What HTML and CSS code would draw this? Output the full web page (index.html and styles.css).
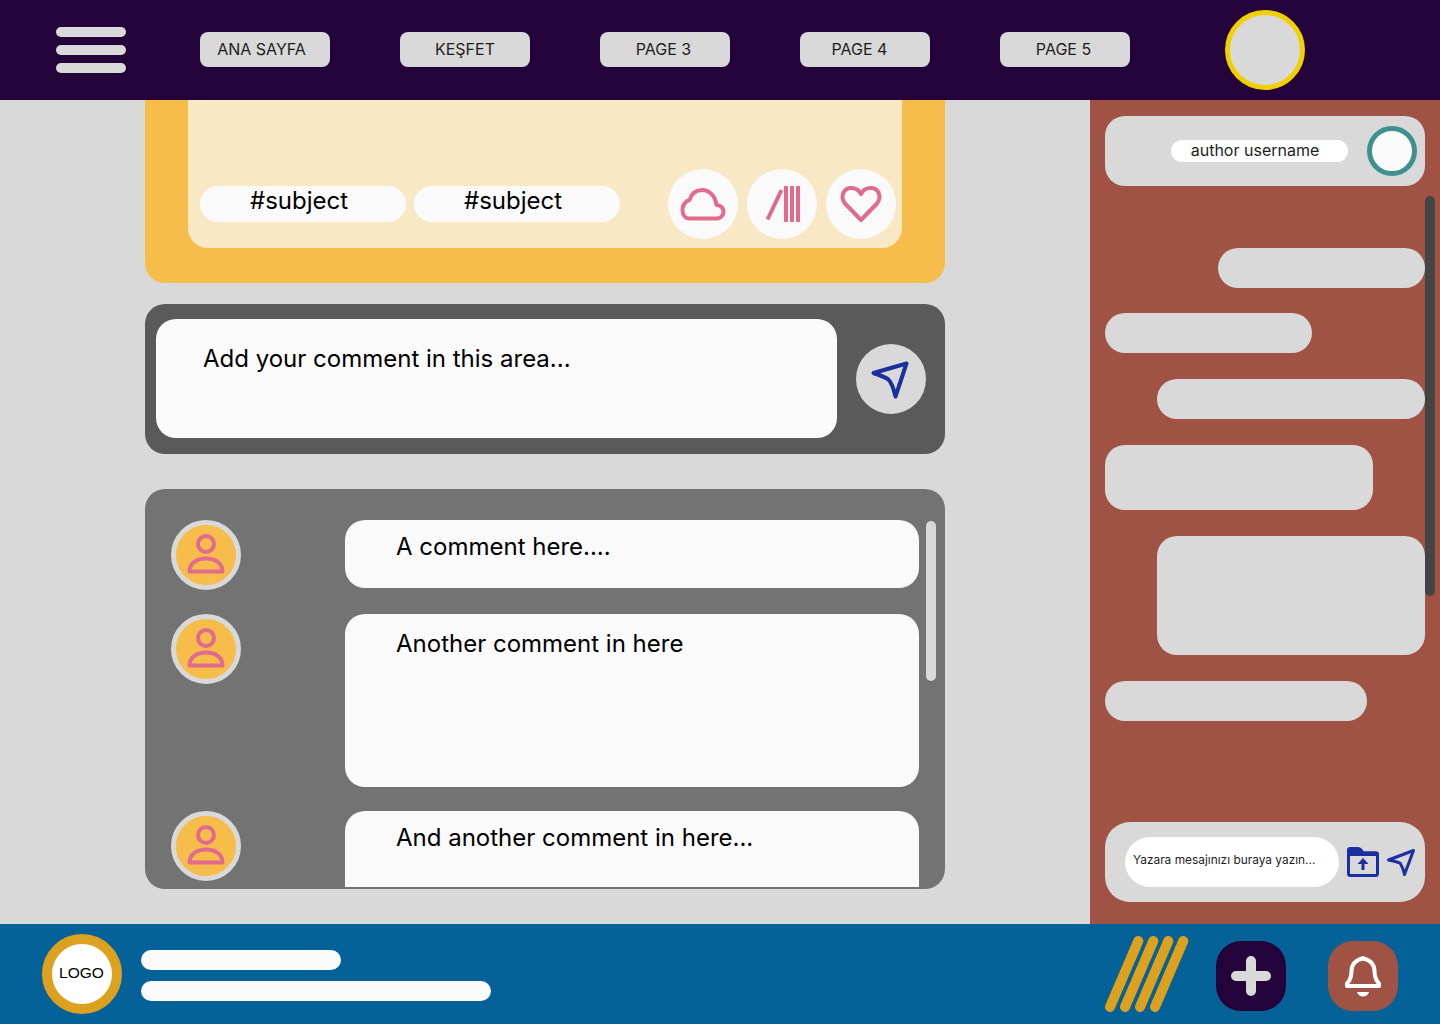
FILE: index.html
```html
<!DOCTYPE html>
<html lang="en">
<head>
    <meta charset="UTF-8">
    <meta name="viewport" content="width=device-width, initial-scale=1.0">
    <title>Blog</title>
    <link rel="stylesheet" href="styles.css">
</head>
<body>
    <header class="topbar">
        <div class="menu-icon"><span></span><span></span><span></span></div>
        <nav class="nav">
            <a class="nav-btn nav-btn-first">ANA SAYFA</a>
            <a class="nav-btn nav-btn-second">KEŞFET</a>
            <a class="nav-btn">PAGE 3</a>
            <a class="nav-btn nav-btn-fourth">PAGE 4</a>
            <a class="nav-btn">PAGE 5</a>
        </nav>
        <div class="profile"></div>
    </header>

    <div class="middle">
        <main class="content">
            <section class="post">
                <div class="post-inner">
                    <span class="tag">#subject</span>
                    <span class="tag">#subject</span>
                    <div class="actions">
                        <button class="action">
                            <svg viewBox="0 0 70 70"><path class="pink-line" d="M21 49.500H49C53 49.500 55.500 46 55.500 42.500C55.500 38.500 52 36 48.500 36C47.500 27 41 21 34.500 21C27 21 23 26 21.500 31C17.500 32 14.500 36 14.500 40.500C14.500 45.500 17 49.500 21 49.500Z"/></svg>
                        </button>
                        <button class="action">
                            <svg viewBox="0 0 70 70">
                                <path class="pink-line slash" d="M20.500 50.500L34.500 21"/>
                                <rect class="pink-fill" x="37" y="17" width="4" height="36"/>
                                <rect class="pink-fill" x="43" y="17" width="4" height="36"/>
                                <rect class="pink-fill" x="49" y="17" width="4" height="36"/>
                            </svg>
                        </button>
                        <button class="action">
                            <svg viewBox="0 0 70 70"><path class="pink-line" d="M35 51L19 34.500C14.500 29 16.500 20 24 19C29 18.500 33 21 35 25C37 21 41 18.500 46 19C53.500 20 55.500 29 51 34.500Z"/></svg>
                        </button>
                    </div>
                </div>
            </section>

            <section class="add-comment">
                <div class="add-comment-field">Add your comment in this area...</div>
                <button class="send-btn">
                    <svg viewBox="0 0 70 70"><path class="blue-line" d="M17.500 29L50.500 19.500L39.500 52.500C38 46 36 39 32.300 35.300C28 32.500 23 31 17.500 29Z"/></svg>
                </button>
            </section>

            <section class="comments">
                <div class="comment comment-short">
                    <div class="avatar">
                        <svg viewBox="5 5 60 60"><circle class="pink-line" cx="35" cy="24" r="8"/><path class="pink-line" d="M18.500 51.500C18.500 43 26 38.500 35 38.500C44 38.500 51.500 43 51.500 51.500Z"/></svg>
                    </div>
                    <div class="bubble bubble-short">A comment here....</div>
                </div>
                <div class="comment">
                    <div class="avatar">
                        <svg viewBox="5 5 60 60"><circle class="pink-line" cx="35" cy="24" r="8"/><path class="pink-line" d="M18.500 51.500C18.500 43 26 38.500 35 38.500C44 38.500 51.500 43 51.500 51.500Z"/></svg>
                    </div>
                    <div class="bubble bubble-tall">Another comment in here</div>
                </div>
                <div class="comment">
                    <div class="avatar">
                        <svg viewBox="5 5 60 60"><circle class="pink-line" cx="35" cy="24" r="8"/><path class="pink-line" d="M18.500 51.500C18.500 43 26 38.500 35 38.500C44 38.500 51.500 43 51.500 51.500Z"/></svg>
                    </div>
                    <div class="bubble bubble-cut">And another comment in here...</div>
                </div>
                <div class="comments-scroll"></div>
            </section>
        </main>

        <aside class="chat">
            <div class="chat-head">
                <span class="author">author username</span>
                <div class="author-pic"></div>
            </div>
            <div class="messages">
                <div class="msg msg-right msg-1"></div>
                <div class="msg msg-2"></div>
                <div class="msg msg-right msg-3"></div>
                <div class="msg msg-4"></div>
                <div class="msg msg-right msg-5"></div>
                <div class="msg msg-6"></div>
            </div>
            <div class="chat-input">
                <div class="chat-field">Yazara mesajınızı buraya yazın...</div>
                <svg class="folder-icon" viewBox="0 0 32 30">
                    <path class="blue-fill" d="M0 3C0 1 1 0 3 0H11C13 0 14 1 15 2L17 4.500H29C31 4.500 32 5.500 32 7.500V9H0Z"/>
                    <rect class="blue-line blue-thin" x="1.500" y="6" width="29" height="22.500" rx="2"/>
                    <path class="blue-fill" d="M16 11L21.500 17H17.500V23H14.500V17H10.500Z"/>
                </svg>
                <svg class="small-send" viewBox="0 0 30 30">
                    <path class="blue-line blue-thin" d="M2.500 13L27.500 3.500L18.500 27.500C17.500 23 16 19 14 16C11 14.500 7 14 2.500 13Z"/>
                </svg>
            </div>
            <div class="chat-scroll"></div>
        </aside>
    </div>

    <footer class="footer">
        <div class="logo">LOGO</div>
        <div class="footer-lines">
            <span class="line line-short"></span>
            <span class="line line-long"></span>
        </div>
        <svg class="stripes" viewBox="0 0 84 76">
            <path d="M5 71L33.300 5"/>
            <path d="M20 71L48.300 5"/>
            <path d="M35 71L63.300 5"/>
            <path d="M50 71L78.300 5"/>
        </svg>
        <button class="foot-btn foot-add">
            <svg viewBox="0 0 70 70"><path d="M20 35H50M35 20V50"/></svg>
        </button>
        <button class="foot-btn foot-bell">
            <svg viewBox="0 0 70 70">
                <path class="bell-line" d="M19 45H51V42.500C47.500 39 46.500 35 46.500 30C46.500 23.500 42 18.500 35 17.500C28 18.500 23.500 23.500 23.500 30C23.500 35 22.500 39 19 42.500Z"/>
                <circle class="bell-fill" cx="35" cy="17" r="2"/>
                <path class="bell-fill" d="M29 51H41C40 54 37.500 55.500 35 55.500C32.500 55.500 30 54 29 51Z"/>
            </svg>
        </button>
    </footer>
</body>
</html>
```

FILE: styles.css
```css
* {
    box-sizing: border-box;
}
body {
    margin: 0;
    width: 1440px;
    height: 1024px;
    overflow: hidden;
    display: flex;
    flex-direction: column;
    background-color: #d9d9d9;
    color: #000;
    font-family: Inter, "Noto Sans", sans-serif;
}
button {
    border: none;
    padding: 0;
    display: block;
}
svg {
    display: block;
}
.pink-line {
    fill: none;
    stroke: #e16b8f;
    stroke-width: 4;
    stroke-linejoin: round;
    stroke-linecap: round;
}
.slash {
    stroke-linecap: butt;
}
.pink-fill {
    fill: #e16b8f;
}
.blue-line {
    fill: none;
    stroke: #1c2f9e;
    stroke-width: 4;
    stroke-linejoin: round;
    stroke-linecap: round;
}
.blue-thin {
    stroke-width: 3;
}
.blue-fill {
    fill: #1c2f9e;
}

/* top bar */
.topbar {
    height: 100px;
    flex: none;
    display: flex;
    align-items: center;
    padding-left: 56px;
    background-color: #24033a;
}
.menu-icon {
    width: 70px;
    display: flex;
    flex-direction: column;
    gap: 8px;
}
.menu-icon span {
    height: 10px;
    border-radius: 5px;
    background-color: #d9d9d9;
}
.nav {
    display: flex;
    gap: 70px;
    margin: 0 0 1px 74px;
}
.nav-btn {
    width: 130px;
    height: 35px;
    padding: 0 3px 2px 0;
    display: flex;
    align-items: center;
    justify-content: center;
    border-radius: 8px;
    background-color: #d9d9d9;
    font-size: 16px;
    color: #1e1e1e;
}
.nav-btn-first {
    padding-right: 7px;
}
.nav-btn-second {
    padding-right: 0;
}
.nav-btn-fourth {
    padding-right: 11px;
}
.profile {
    width: 80px;
    height: 80px;
    margin-left: 95px;
    border: 5px solid #f0d000;
    border-radius: 50%;
    background-color: #d9d9d9;
}

.middle {
    flex: 1;
    display: flex;
    min-height: 0;
}

/* left side */
.content {
    width: 1090px;
    padding-left: 145px;
}
.post {
    width: 800px;
    height: 183px;
    padding: 0 43px;
    border-radius: 0 0 20px 20px;
    background-color: #f6bd4a;
}
.post-inner {
    height: 148px;
    padding: 0 6px 9px 12px;
    display: flex;
    align-items: flex-end;
    gap: 8px;
    border-radius: 0 0 20px 20px;
    background-color: #f8e8c6;
}
.tag {
    width: 206px;
    height: 36px;
    margin-bottom: 17px;
    padding-right: 8px;
    text-align: center;
    line-height: 30px;
    border-radius: 18px;
    background-color: #fafafa;
    font-size: 24px;
}
.actions {
    display: flex;
    gap: 9px;
    margin-left: auto;
}
.action {
    width: 70px;
    height: 70px;
    border-radius: 50%;
    background-color: #fafafa;
}
.add-comment {
    width: 800px;
    height: 150px;
    margin-top: 21px;
    padding: 15px 19px 16px 11px;
    display: flex;
    gap: 19px;
    border-radius: 20px;
    background-color: #5a5a5a;
}
.add-comment-field {
    flex: 1;
    padding: 25px 47px;
    line-height: 30px;
    border-radius: 20px;
    background-color: #fafafa;
    font-size: 24px;
}
.send-btn {
    width: 70px;
    height: 70px;
    margin-top: 25px;
    flex: none;
    border-radius: 50%;
    background-color: #d9d9d9;
}
.comments {
    position: relative;
    width: 800px;
    height: 400px;
    margin-top: 35px;
    padding: 31px 26px 0;
    overflow: hidden;
    border-radius: 20px;
    background-color: #737373;
}
.comment {
    display: flex;
    align-items: flex-start;
    gap: 104px;
    margin-bottom: 24px;
}
.comment-short {
    height: 70px;
}
.avatar {
    width: 70px;
    height: 70px;
    flex: none;
    border: 5px solid #d9d9d9;
    border-radius: 50%;
    background-color: #f6bd4a;
}
.bubble {
    width: 574px;
    height: 173px;
    padding: 12px 51px;
    line-height: 30px;
    border-radius: 20px;
    background-color: #fafafa;
    font-size: 24px;
}
.bubble-short {
    height: 68px;
}
.bubble-tall {
    padding-top: 15px;
}
.bubble-cut {
    height: 76px;
    border-radius: 20px 20px 0 0;
}
.comments-scroll {
    position: absolute;
    top: 32px;
    left: 781px;
    width: 10px;
    height: 160px;
    border-radius: 5px;
    background-color: #d9d9d9;
}

/* chat */
.chat {
    position: relative;
    width: 350px;
    padding: 16px 15px 22px;
    display: flex;
    flex-direction: column;
    background-color: #a05244;
}
.chat-head {
    height: 70px;
    padding-right: 8px;
    display: flex;
    align-items: center;
    justify-content: flex-end;
    gap: 19px;
    border-radius: 20px;
    background-color: #d9d9d9;
}
.author {
    width: 177px;
    height: 22px;
    padding-right: 9px;
    text-align: center;
    line-height: 21px;
    border-radius: 11px;
    background-color: #fff;
    font-size: 16px;
    color: #1e1e1e;
}
.author-pic {
    width: 50px;
    height: 50px;
    border: 5px solid #3f918f;
    border-radius: 50%;
    background-color: #fafafa;
}
.messages {
    flex: 1;
    margin-top: 62px;
    display: flex;
    flex-direction: column;
    align-items: flex-start;
    gap: 26px;
}
.msg {
    height: 40px;
    border-radius: 20px;
    background-color: #d9d9d9;
}
.msg-right {
    align-self: flex-end;
}
.msg-1 { width: 207px; }
.msg-2 { width: 207px; margin-top: -1px; }
.msg-3 { width: 268px; }
.msg-4 { width: 268px; height: 65px; }
.msg-5 { width: 268px; height: 119px; }
.msg-6 { width: 262px; }
.chat-input {
    height: 80px;
    padding-left: 20px;
    display: flex;
    align-items: center;
    border-radius: 25px;
    background-color: #d9d9d9;
}
.chat-field {
    width: 214px;
    height: 50px;
    padding-left: 8px;
    line-height: 46px;
    border-radius: 25px;
    background-color: #fff;
    font-size: 11.9px;
    color: #1e1e1e;
}
.folder-icon {
    width: 32px;
    height: 30px;
    margin-left: 8px;
}
.small-send {
    width: 30px;
    height: 30px;
    margin-left: 7px;
}
.chat-scroll {
    position: absolute;
    top: 96px;
    left: 335px;
    width: 10px;
    height: 400px;
    border-radius: 5px;
    background-color: #444;
}

/* footer */
.footer {
    height: 100px;
    flex: none;
    display: flex;
    align-items: center;
    padding: 0 42px;
    background-color: #046299;
}
.logo {
    width: 80px;
    height: 80px;
    padding: 0 1px 2px 0;
    display: flex;
    align-items: center;
    justify-content: center;
    border: 10px solid #dca11f;
    border-radius: 50%;
    background-color: #fff;
    font-family: "Liberation Sans", Arial, sans-serif;
    font-size: 15.5px;
}
.footer-lines {
    margin: 2px 0 0 19px;
    display: flex;
    flex-direction: column;
    gap: 11px;
}
.line {
    display: block;
    height: 20px;
    border-radius: 10px;
    background-color: #fafafa;
}
.line-short { width: 200px; }
.line-long { width: 350px; }
.stripes {
    width: 84px;
    height: 76px;
    margin-left: auto;
}
.stripes path {
    stroke: #dca11f;
    stroke-width: 10;
    stroke-linecap: round;
}
.foot-btn {
    width: 70px;
    height: 70px;
    margin-top: 4px;
    border-radius: 25px;
}
.foot-add {
    margin-left: 27px;
    background-color: #24033a;
}
.foot-add path {
    fill: none;
    stroke: #d9d9d9;
    stroke-width: 10;
    stroke-linecap: round;
}
.foot-bell {
    margin-left: 42px;
    background-color: #a05244;
}
.bell-line {
    fill: none;
    stroke: #fff;
    stroke-width: 4;
    stroke-linejoin: round;
}
.bell-fill {
    fill: #fff;
}
```
